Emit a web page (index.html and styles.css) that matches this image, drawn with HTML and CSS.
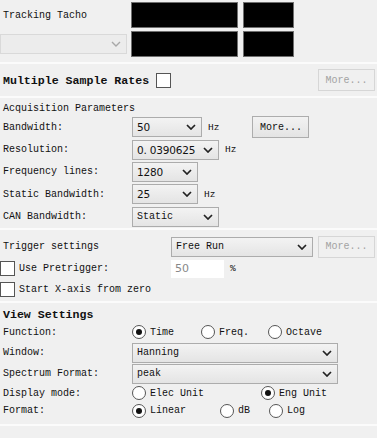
FILE: index.html
```html
<!DOCTYPE html>
<html lang="en">
<head>
    <meta charset="UTF-8">
    <title>Acquisition Settings</title>
    <link rel="stylesheet" href="styles.css">
</head>
<body>

    <div class="panel">

        <!-- Tacho -->
        <div class="section tacho">
            <div class="tacho-row">
                <span class="label tacho-label">Tracking Tacho</span>
                <div class="screen wide"></div>
                <div class="screen"></div>
            </div>
            <div class="tacho-row">
                <div class="combo disabled tacho-combo"><span></span><i class="chev"></i></div>
                <div class="screen wide"></div>
                <div class="screen"></div>
            </div>
        </div>

        <!-- Multiple sample rates -->
        <div class="section multi">
            <span class="label bold">Multiple Sample Rates</span>
            <span class="check"></span>
            <span class="spacer"></span>
            <button class="btn off">More...</button>
        </div>

        <!-- Acquisition -->
        <div class="section acq">
            <div class="title">Acquisition Parameters</div>
            <div class="row">
                <span class="label col">Bandwidth:</span>
                <div class="combo w70"><span class="num">50</span><i class="chev"></i></div>
                <span class="unit">Hz</span>
                <button class="btn on more-bw">More...</button>
            </div>
            <div class="row">
                <span class="label col">Resolution:</span>
                <div class="combo w87"><span class="num">0. 0390625</span><i class="chev"></i></div>
                <span class="unit">Hz</span>
            </div>
            <div class="row">
                <span class="label col">Frequency lines:</span>
                <div class="combo w66"><span class="num">1280</span><i class="chev"></i></div>
            </div>
            <div class="row">
                <span class="label col">Static Bandwidth:</span>
                <div class="combo w66"><span class="num">25</span><i class="chev"></i></div>
                <span class="unit">Hz</span>
            </div>
            <div class="row">
                <span class="label col">CAN Bandwidth:</span>
                <div class="combo w87"><span>Static</span><i class="chev"></i></div>
            </div>
        </div>

        <!-- Trigger -->
        <div class="section trig">
            <div class="row trig-row">
                <span class="label tcol">Trigger settings</span>
                <div class="combo w142"><span>Free Run</span><i class="chev"></i></div>
                <span class="spacer"></span>
                <button class="btn off">More...</button>
            </div>
            <div class="row chk-row">
                <span class="check"></span>
                <span class="label chk-label">Use Pretrigger:</span>
                <div class="field">50</div>
                <span class="unit">%</span>
            </div>
            <div class="row chk-row">
                <span class="check"></span>
                <span class="label">Start X-axis from zero</span>
            </div>
        </div>

        <!-- View -->
        <div class="section view">
            <div class="title bold">View Settings</div>
            <div class="row r-row fn-row">
                <span class="label col">Function:</span>
                <span class="radio checked"></span><span class="label opt o-time">Time</span>
                <span class="radio"></span><span class="label opt o-freq">Freq.</span>
                <span class="radio"></span><span class="label opt">Octave</span>
            </div>
            <div class="row c-row">
                <span class="label col">Window:</span>
                <div class="combo w206"><span>Hanning</span><i class="chev"></i></div>
            </div>
            <div class="row c-row">
                <span class="label col">Spectrum Format:</span>
                <div class="combo w206"><span>peak</span><i class="chev"></i></div>
            </div>
            <div class="row r-row disp-row">
                <span class="label col">Display mode:</span>
                <span class="radio"></span><span class="label opt o-elec">Elec Unit</span>
                <span class="radio checked"></span><span class="label opt">Eng Unit</span>
            </div>
            <div class="row r-row fmt-row">
                <span class="label col">Format:</span>
                <span class="radio checked"></span><span class="label opt o-lin">Linear</span>
                <span class="radio"></span><span class="label opt o-db">dB</span>
                <span class="radio"></span><span class="label opt">Log</span>
            </div>
        </div>

    </div>

</body>
</html>
```

FILE: styles.css
```css
body {
    margin: 0;
    background-color: #f0f0f0;
    font-family: "Liberation Mono", "DejaVu Sans Mono", monospace;
    font-size: 10px;
    color: #111;
}

.panel {
    width: 377px;
}

.section {
    border-bottom: 2px solid #fbfbfb;
    box-sizing: border-box;
}

.label {
    white-space: nowrap;
}

.bold {
    font-weight: bold;
    font-size: 11.6px;
}

.spacer {
    flex: 1;
}

/* tacho */
.tacho {
    height: 64px;
    padding-top: 2px;
    display: flex;
    flex-direction: column;
    gap: 3px;
}

.tacho-row {
    display: flex;
    align-items: center;
    height: 26px;
}

.tacho-label {
    width: 131px;
    padding-left: 3px;
    box-sizing: border-box;
}

.screen {
    width: 51px;
    height: 26px;
    background-color: #000;
    border: 1px solid #6f6f6f;
    box-sizing: border-box;
    margin-left: 5px;
}

.screen.wide {
    width: 107px;
    margin-left: 0;
}

.tacho-combo {
    width: 127px;
    height: 20px;
    margin-right: 4px;
}

/* combos */
.combo {
    display: flex;
    align-items: center;
    height: 20px;
    border: 1px solid #acacac;
    background: linear-gradient(#f3f3f3, #e4e4e4);
    box-sizing: border-box;
    padding: 0 5px 0 4px;
}

.combo span {
    flex: 1;
    white-space: nowrap;
}

.combo .num {
    font-family: "DejaVu Sans", sans-serif;
    font-size: 10.5px;
    letter-spacing: -0.2px;
}

.chev {
    width: 10px;
    height: 6px;
    flex: none;
    background: no-repeat center / 10px 6px url("data:image/svg+xml;utf8,<svg xmlns='http://www.w3.org/2000/svg' width='10' height='6' viewBox='0 0 10 6'><polyline points='1,1 5,5 9,1' fill='none' stroke='%23222' stroke-width='1.7'/></svg>");
}

.combo.disabled {
    background: #ececec;
    border-color: #d9d9d9;
}

.combo.disabled .chev {
    background-image: url("data:image/svg+xml;utf8,<svg xmlns='http://www.w3.org/2000/svg' width='10' height='6' viewBox='0 0 10 6'><polyline points='1,1 5,5 9,1' fill='none' stroke='%23a8a8a8' stroke-width='1.4'/></svg>");
}

.w66 { width: 66px; }
.w70 { width: 70px; }
.w87 { width: 87px; }
.w142 { width: 142px; }
.w206 { width: 206px; }

.unit {
    margin-left: 6px;
    font-size: 9.5px;
}

/* buttons */
.btn {
    font-family: "Liberation Mono", "DejaVu Sans Mono", monospace;
    font-size: 10px;
    width: 57px;
    height: 22px;
    padding: 0;
    box-sizing: border-box;
}

.btn.on {
    border: 1px solid #adadad;
    background: linear-gradient(#f2f2f2, #e4e4e4);
    color: #111;
}

.btn.off {
    border: 1px solid #d6d6d6;
    background: #f0f0f0;
    color: #a3a3a3;
}

.more-bw {
    margin-left: 33px;
}

/* checkbox + radio */
.check {
    width: 15px;
    height: 15px;
    background-color: #fff;
    border: 1px solid #555;
    box-sizing: border-box;
}

.radio {
    width: 14px;
    height: 14px;
    border-radius: 50%;
    border: 1px solid #555;
    background-color: #fff;
    box-sizing: border-box;
    display: flex;
    align-items: center;
    justify-content: center;
    margin-right: 4px;
}

.radio.checked::after {
    content: "";
    width: 6px;
    height: 6px;
    border-radius: 50%;
    background-color: #111;
}

/* multiple sample rates */
.multi {
    height: 34px;
    display: flex;
    align-items: center;
    padding: 0 2px 0 3px;
}

.multi .check {
    margin-left: 7px;
}

/* rows */
.row {
    display: flex;
    align-items: center;
    height: 22px;
}

.col {
    width: 132px;
    padding-left: 3px;
    box-sizing: border-box;
}

.title {
    padding-left: 3px;
    height: 14px;
    line-height: 14px;
}

.acq {
    height: 132px;
    padding-top: 4px;
}

.acq .row {
    height: 22.4px;
}

/* trigger */
.trig {
    height: 73px;
    padding-top: 5px;
}

.trig-row {
    height: 23px;
    padding-right: 2px;
}

.tcol {
    width: 171px;
    padding-left: 3px;
    box-sizing: border-box;
}

.chk-row {
    height: 21px;
}

.chk-label {
    width: 156px;
    padding-left: 4px;
    box-sizing: border-box;
}

.chk-row .label {
    padding-left: 4px;
}

.field {
    width: 53px;
    height: 18px;
    background-color: #fff;
    box-sizing: border-box;
    padding-left: 4px;
    line-height: 18px;
    font-family: "DejaVu Sans", sans-serif;
    font-size: 11px;
    color: #888;
}

/* view */
.view {
    height: 123px;
    padding-top: 4px;
}

.view .title {
    height: 15px;
    line-height: 15px;
}

.fn-row {
    height: 20px;
}

.c-row {
    height: 21px;
}

.disp-row {
    height: 18px;
}

.fmt-row {
    height: 17px;
}

.o-time { width: 51px; }
.o-freq { width: 49px; }
.o-elec { width: 111px; }
.o-lin { width: 70px; }
.o-db { width: 31px; }
```
